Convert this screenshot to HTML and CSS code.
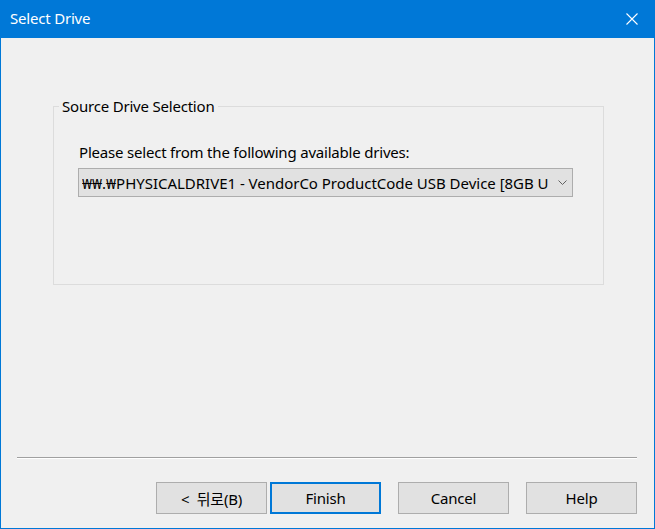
FILE: index.html
```html
<!DOCTYPE html>
<html>
<head>
<meta charset="utf-8">
<link rel="stylesheet" href="styles.css">
</head>
<body>
<div class="window">
  <div class="titlebar">
    <span class="title">Select Drive</span>
    <svg class="close" width="12" height="12" viewBox="0 0 12 12"><path d="M0.5 0.5 L11.5 11.5 M11.5 0.5 L0.5 11.5" stroke="#ffffff" stroke-width="1.1" fill="none"/></svg>
  </div>
  <div class="content">
    <fieldset class="group">
      <legend class="legend">Source Drive Selection</legend>
      <div class="label">Please select from the following available drives:</div>
      <div class="combo">
        <span class="combo-text">&#8361;&#8361;.&#8361;PHYSICALDRIVE1 - VendorCo ProductCode USB Device [8GB U</span>
        <svg class="chev" width="9" height="5" viewBox="0 0 9 5"><path d="M0.5 0.5 L4.5 4.5 L8.5 0.5" stroke="#606060" stroke-width="1" fill="none"/></svg>
      </div>
    </fieldset>
    <div class="separator"></div>
    <div class="buttons">
      <div class="btn back">&lt;&nbsp; 뒤로(B)</div>
      <div class="btn default">Finish</div>
      <div class="btn spaced">Cancel</div>
      <div class="btn spaced">Help</div>
    </div>
  </div>
</div>
</body>
</html>
```
FILE: styles.css
```css
html, body {
  margin: 0;
  padding: 0;
}
body {
  width: 655px;
  height: 529px;
  overflow: hidden;
  font-family: "Noto Sans", "Noto Sans CJK KR", sans-serif;
  font-size: 15px;
  color: #000;
}
.window {
  box-sizing: border-box;
  width: 655px;
  height: 529px;
  border: 1px solid #0078d7;
  border-top: none;
  background: #f0f0f0;
  display: flex;
  flex-direction: column;
}
.titlebar {
  height: 38px;
  margin: 0 -1px;
  background: #0078d7;
  color: #fff;
  display: flex;
  align-items: center;
  justify-content: space-between;
  padding: 0 17px 0 10px;
  flex-shrink: 0;
}
.title {
  font-size: 15px;
  letter-spacing: -0.2px;
  position: relative;
  top: -1px;
}
.close {
  display: block;
}
.content {
  flex: 1;
  display: flex;
  flex-direction: column;
}
.group {
  margin: 58px 0 0 52px;
  padding: 0 0 87px 24px;
  width: 551px;
  box-sizing: border-box;
  border: 1px solid #dcdcdc;
  min-inline-size: 0;
}
.legend {
  padding: 0 3px;
  line-height: 20px;
  margin-left: -19px;
  letter-spacing: -0.2px;
}
.label {
  margin-top: 26px;
  padding-left: 1px;
  line-height: 20px;
  letter-spacing: -0.2px;
}
.combo {
  margin-top: 6px;
  width: 495px;
  height: 29px;
  box-sizing: border-box;
  border: 1px solid #adadad;
  background: #e1e1e1;
  display: flex;
  align-items: center;
  padding: 0 5px 0 3px;
}
.combo-text {
  flex: 1;
  white-space: nowrap;
  overflow: hidden;
  letter-spacing: -0.02px;
}
.chev {
  display: block;
  margin-left: 6px;
}
.separator {
  margin: auto 17px 0 16px;
  height: 1px;
  background: #a0a0a0;
  border-bottom: 1px solid #ffffff;
}
.buttons {
  display: flex;
  justify-content: flex-end;
  padding: 23px 17px 14px 0;
}
.btn {
  width: 111px;
  height: 32px;
  box-sizing: border-box;
  border: 1px solid #adadad;
  background: #e1e1e1;
  display: flex;
  align-items: center;
  justify-content: center;
  letter-spacing: -0.2px;
}
.btn.default {
  border: 2px solid #0078d7;
  margin-left: 3px;
}
.btn.spaced {
  margin-left: 17px;
}
```
